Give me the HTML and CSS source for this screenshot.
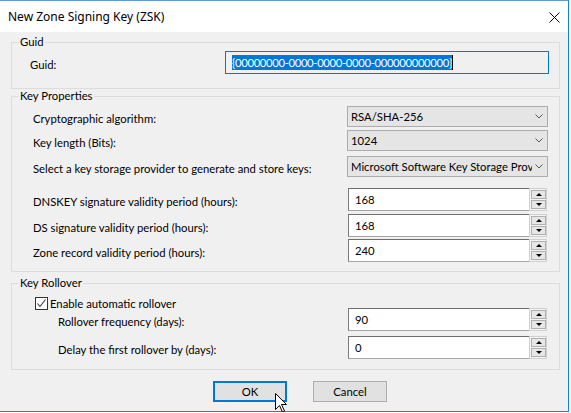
FILE: index.html
```html
<!DOCTYPE html>
<html lang="en">
<head>
<meta charset="utf-8">
<title>New Zone Signing Key (ZSK)</title>
<link rel="stylesheet" href="styles.css">
</head>
<body>
<div class="window">
  <div class="titlebar">
    <span class="title">New Zone Signing Key (ZSK)</span>
    <svg class="close" width="11" height="11" viewBox="0 0 11 11"><path d="M0.5 0.5 L10.5 10.5 M10.5 0.5 L0.5 10.5" stroke="#000" stroke-width="1" fill="none"/></svg>
  </div>
  <div class="content">
    <fieldset class="group g-guid">
      <legend>Guid</legend>
      <div class="rows">
        <div class="row">
          <span class="lbl">Guid:</span>
          <div class="guidbox"><span class="selected">{00000000-0000-0000-0000-000000000000}</span><span class="caret"></span></div>
        </div>
      </div>
    </fieldset>

    <fieldset class="group g-props">
      <legend>Key Properties</legend>
      <div class="rows">
        <div class="row r-sel">
          <span class="lbl">Cryptographic algorithm:</span>
          <div class="combo"><span class="combo-text">RSA/SHA-256</span><svg class="chev" width="8" height="5" viewBox="0 0 8 5"><path d="M0.5 0.5 L4 4 L7.5 0.5" stroke="#555" fill="none"/></svg></div>
        </div>
        <div class="row r-sel mt3">
          <span class="lbl">Key length (Bits):</span>
          <div class="combo"><span class="combo-text">1024</span><svg class="chev" width="8" height="5" viewBox="0 0 8 5"><path d="M0.5 0.5 L4 4 L7.5 0.5" stroke="#555" fill="none"/></svg></div>
        </div>
        <div class="row r-sel mt5">
          <span class="lbl">Select a key storage provider to generate and store keys:</span>
          <div class="combo"><span class="combo-text">Microsoft Software Key Storage Prov</span><svg class="chev" width="8" height="5" viewBox="0 0 8 5"><path d="M0.5 0.5 L4 4 L7.5 0.5" stroke="#555" fill="none"/></svg></div>
        </div>
        <div class="row r-spin mt11">
          <span class="lbl">DNSKEY signature validity period (hours):</span>
          <div class="spin"><div class="spin-input">168</div><div class="spinbtns"><div class="sb"><span class="tri-up"></span></div><div class="sb"><span class="tri-down"></span></div></div></div>
        </div>
        <div class="row r-spin mt3">
          <span class="lbl">DS signature validity period (hours):</span>
          <div class="spin"><div class="spin-input">168</div><div class="spinbtns"><div class="sb"><span class="tri-up"></span></div><div class="sb"><span class="tri-down"></span></div></div></div>
        </div>
        <div class="row r-spin mt2">
          <span class="lbl">Zone record validity period (hours):</span>
          <div class="spin"><div class="spin-input">240</div><div class="spinbtns"><div class="sb"><span class="tri-up"></span></div><div class="sb"><span class="tri-down"></span></div></div></div>
        </div>
      </div>
    </fieldset>

    <fieldset class="group g-roll">
      <legend>Key Rollover</legend>
      <div class="rows">
        <div class="checkrow">
          <span class="checkbox"><svg width="11" height="11" viewBox="0 0 11 11"><path d="M1.5 5.5 L4 8.5 L9.5 1.5" stroke="#333" stroke-width="1.1" fill="none"/></svg></span>
          <span class="checklabel">Enable automatic rollover</span>
        </div>
        <div class="row r-spin mtn2">
          <span class="lbl sub">Rollover frequency (days):</span>
          <div class="spin"><div class="spin-input">90</div><div class="spinbtns"><div class="sb"><span class="tri-up"></span></div><div class="sb"><span class="tri-down"></span></div></div></div>
        </div>
        <div class="row r-spin mt5">
          <span class="lbl sub">Delay the first rollover by (days):</span>
          <div class="spin"><div class="spin-input">0</div><div class="spinbtns"><div class="sb"><span class="tri-up"></span></div><div class="sb"><span class="tri-down"></span></div></div></div>
        </div>
      </div>
    </fieldset>

    <div class="buttons">
      <button class="btn btn-default">OK</button>
      <button class="btn">Cancel</button>
    </div>
  </div>
  <svg class="cursor" width="13" height="20" viewBox="0 0 13 20"><path d="M0.5 0.5 L0.5 16.5 L4.5 12.5 L7.5 19 L9.5 18 L6.5 11.5 L11.5 11.5 Z" fill="#fff" stroke="#000" stroke-width="1" stroke-linejoin="miter"/></svg>
</div>
</body>
</html>
```

FILE: styles.css
```css
* { box-sizing: border-box; }
html, body { margin: 0; padding: 0; background: #ffffff; }
body {
  font-family: "Lato", "Segoe UI", sans-serif;
  font-size: 11.3px;
  color: #000;
}
.window {
  position: relative;
  width: 569px;
  height: 412px;
  border-top: 1px solid #5b9bd8;
  border-right: 1px solid #1883d7;
  border-bottom: 1px solid #1883d7;
  background: #f0f0f0;
  display: flex;
  flex-direction: column;
}
.titlebar {
  height: 31px;
  background: #fff;
  display: flex;
  align-items: center;
  padding-left: 8px;
}
.title { font-family: "Noto Sans", sans-serif; font-size: 12px; line-height: 16px; margin-top: 1px; }
.close { margin-left: auto; margin-right: 8px; margin-top: 1px; }
.content {
  flex: 1;
  padding: 3px 8px 0 11px;
}
.group {
  margin: 0;
  padding: 0;
  border: 1px solid #dcdcdc;
  min-width: 0;
}
.group legend {
  margin-left: 6px;
  padding: 0 1px 0 2px;
  line-height: 14px;
}
.rows { display: flex; flex-direction: column; }
.row {
  display: flex;
  justify-content: space-between;
  align-items: center;
}
.lbl { line-height: 14px; padding-top: 5px; white-space: nowrap; }
.lbl.sub { padding-left: 23px; }
.r-sel { height: 21px; }
.r-spin { height: 23px; }
.mt2 { margin-top: 2px; }
.mt3 { margin-top: 3px; }
.mt5 { margin-top: 5px; }
.mt11 { margin-top: 11px; }
.mtn2 { margin-top: -2px; }

.g-guid .rows { padding: 2px 10px 14px 18px; }
.g-guid .row { height: 23px; }
.guidbox {
  width: 324px;
  height: 23px;
  border: 1px solid #0078d7;
  background: #f0f0f0;
  display: flex;
  align-items: center;
  padding-left: 6px;
}
.selected {
  background: #0078d7;
  color: #fff;
  line-height: 15px;
  letter-spacing: -0.35px;
}
.caret { width: 1px; height: 15px; background: #000; }

.g-props { margin-top: 0; }
.g-props .rows { padding: 3px 11px 9px 21px; }
.combo {
  width: 201px;
  height: 21px;
  background: #e5e5e5;
  border: 1px solid #acacac;
  display: flex;
  align-items: center;
  padding: 0 3px 0 3px;
}
.combo-text { flex: 1; white-space: nowrap; overflow: hidden; line-height: 14px; }
.chev { margin-left: 3px; margin-right: 1px; }

.spin { display: flex; margin-right: 1px; height: 23px; }
.spin-input {
  width: 181px;
  height: 23px;
  background: #fff;
  border-top: 1px solid #6e6e6e;
  border-left: 1px solid #7a7a7a;
  border-bottom: 1px solid #a5a5a5;
  padding-left: 6px;
  display: flex;
  align-items: center;
}
.spinbtns {
  width: 18px;
  height: 23px;
  display: flex;
  flex-direction: column;
  gap: 1px;
  padding: 1px 0 1px 1px;
  border: 1px solid #d0d0d0;
  background: #f4f4f4;
}
.sb {
  flex: 1;
  border: 1px solid #b0b0b0;
  background: #e6e6e6;
  display: flex;
  align-items: center;
  justify-content: center;
}
.tri-up {
  width: 0; height: 0;
  border-left: 3px solid transparent;
  border-right: 3px solid transparent;
  border-bottom: 3px solid #000;
}
.tri-down {
  width: 0; height: 0;
  border-left: 3px solid transparent;
  border-right: 3px solid transparent;
  border-top: 3px solid #000;
}

.g-roll { margin-top: 4px; }
.g-roll .rows { padding: 7px 11px 10px 23px; }
.checkrow { display: flex; align-items: center; height: 13px; }
.checkbox {
  width: 13px;
  height: 13px;
  border: 1px solid #333;
  background: #fff;
  display: flex;
  align-items: center;
  justify-content: center;
}
.checklabel { margin-left: 2px; line-height: 14px; padding-top: 1px; }

.buttons {
  margin-top: 11px;
  padding-left: 202px;
  display: flex;
  gap: 26px;
}
.btn {
  width: 74px;
  height: 21px;
  margin: 0;
  padding: 0;
  font-family: inherit;
  font-size: 11.3px;
  color: #000;
  background: #e1e1e1;
  border: 1px solid #adadad;
  border-radius: 0;
}
.btn-default { border: 2px solid #0078d7; }

.cursor { position: absolute; left: 275px; top: 392px; }
```
